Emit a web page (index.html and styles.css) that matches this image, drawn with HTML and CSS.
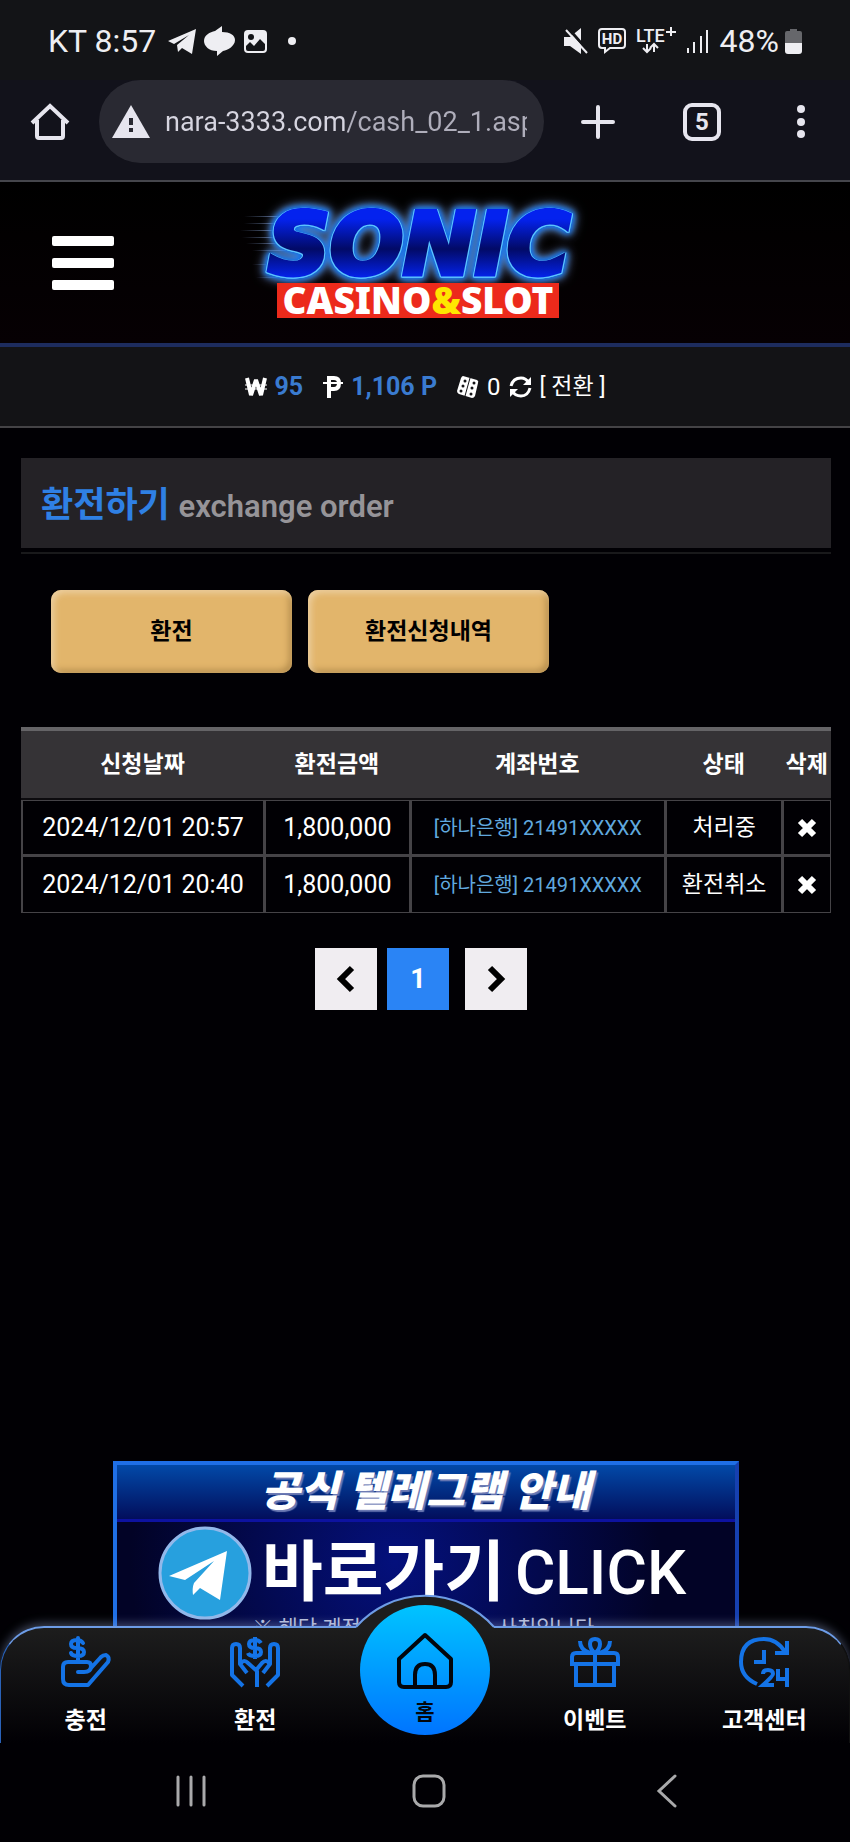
FILE: index.html
```html
<!DOCTYPE html>
<html lang="ko">
<head>
    <meta charset="UTF-8">
    <meta name="viewport" content="width=device-width, initial-scale=1.0">
    <title>환전하기</title>
    <link rel="stylesheet" href="styles.css">
</head>
<body>
    <!-- 상태 표시줄 -->
    <div class="status-bar">
        <div class="status-group">
            <span class="status-text">KT 8:57</span>
            <svg width="28" height="28" viewBox="0 0 28 28" fill="#eeeef2"><path d="M0 14 28 2 24 27 14 21 10 25 9 18 21 8 6 17Z"/></svg>
            <svg width="31" height="30" viewBox="0 0 31 30" fill="#eeeef2"><path d="M18 0V6C26 6 31 9 31 14C31 20 24 24 19 25L13 30V25C5 25 0 20 0 15C0 9 6 6 11 5Z"/></svg>
            <svg width="25" height="25" viewBox="0 0 25 25"><rect x="1" y="1" width="23" height="23" rx="4" fill="#eeeef2"/><circle cx="8" cy="8" r="3" fill="#131417"/><path d="M3 20V17L7 13 11 17 17 10 22 15V20Q22 22 20 22H5Q3 22 3 20Z" fill="#131417"/></svg>
            <span class="status-dot"></span>
        </div>
        <div class="status-group status-right">
            <svg width="24" height="26" viewBox="0 0 24 26"><path d="M0 9H6L17 0V26L6 18H0Z" fill="#eeeef2"/><path d="M3 -1 25 24" stroke="#131417" stroke-width="3"/><path d="M2 2 23 25" stroke="#eeeef2" stroke-width="2"/></svg>
            <svg class="hd" width="28" height="26" viewBox="0 0 28 26"><path d="M4 1H24Q27 1 27 4V17Q27 20 24 20H12L7 24V20H4Q1 20 1 17V4Q1 1 4 1Z" fill="none" stroke="#eeeef2" stroke-width="2"/><text x="14" y="16" text-anchor="middle" font-size="15">HD</text></svg>
            <svg class="lte" width="40" height="28" viewBox="0 0 40 28"><text x="0" y="15" font-size="18">LTE</text><path d="M35 0V9M30 5H40M11 17V24M7 21 11 25 15 21M18 25V18M14 21 18 17 22 21" fill="none" stroke="#eeeef2" stroke-width="2"/></svg>
            <svg width="24" height="26" viewBox="0 0 24 26" stroke="#eeeef2" stroke-width="2"><path d="M2 20V25M8 14V25M15 8V25M21 2V25"/></svg>
            <span class="status-text">48%</span>
            <svg class="battery" width="17" height="25" viewBox="0 0 17 25"><path d="M5 0H12V2H15Q17 2 17 4V15H0V4Q0 2 2 2H5Z" fill="#66676b"/><path d="M0 14H17V22Q17 25 14 25H3Q0 25 0 22Z" fill="#eeeef2"/></svg>
        </div>
    </div>

    <!-- 브라우저 주소창 -->
    <div class="browser-bar">
        <button class="browser-button" aria-label="홈페이지">
            <svg width="38" height="38" viewBox="0 0 38 38" fill="none" stroke="#e6e5ee" stroke-width="4"><path d="M1 20 19 3 37 20M6 17V33Q6 35 8 35H30Q32 35 32 33V17"/></svg>
        </button>
        <div class="address">
            <svg width="38" height="33" viewBox="0 0 38 33"><path d="M19 0 38 33H0Z" fill="#e6e5ee"/><path d="M17 13H21V20H17ZM17 23H21V27H17Z" fill="#292932"/></svg>
            <input class="address-input" type="text" aria-label="주소" value="nara-3333.com/cash_02_1.asp" readonly>
        </div>
        <div class="browser-actions">
            <button class="browser-button" aria-label="새 탭">
                <svg width="34" height="34" viewBox="0 0 34 34" stroke="#e6e5ee" stroke-width="4" stroke-linecap="round"><path d="M17 2V32M2 17H32"/></svg>
            </button>
            <button class="browser-button tab-count" aria-label="탭 5개">5</button>
            <button class="browser-button menu-dots" aria-label="더보기">
                <svg width="24" height="36" viewBox="0 0 24 36" fill="#e6e5ee"><circle cx="12" cy="5" r="4"/><circle cx="12" cy="18" r="4"/><circle cx="12" cy="30" r="4"/></svg>
            </button>
        </div>
    </div>

    <header class="site-header">
        <button class="hamburger" aria-label="메뉴"><span></span><span></span><span></span></button>
        <a class="logo" href="#" aria-label="SONIC CASINO&amp;SLOT">
            <svg width="370" height="130" viewBox="0 0 370 130">
                <defs>
                    <linearGradient id="sonic-fill" x1="0" y1="0.25" x2="0" y2="0.85">
                        <stop offset="0" stop-color="#0422ee"/>
                        <stop offset="0.5" stop-color="#020a66"/>
                        <stop offset="1" stop-color="#0424f2"/>
                    </linearGradient>
                    <linearGradient id="speed" x1="0" y1="0" x2="1" y2="0">
                        <stop offset="0" stop-color="#6f86b0" stop-opacity="0"/>
                        <stop offset="1" stop-color="#6f86b0"/>
                    </linearGradient>
                </defs>
                <g fill="url(#speed)">
                    <rect x="4" y="18" width="40" height="1"/><rect x="4" y="25" width="40" height="1"/>
                    <rect x="0" y="32" width="40" height="1"/><rect x="2" y="39" width="40" height="1"/>
                    <rect x="6" y="45" width="40" height="1"/><rect x="12" y="52" width="34" height="1"/>
                    <rect x="12" y="66" width="30" height="1"/><rect x="16" y="79" width="30" height="1"/>
                </g>
                <text class="logo-name" x="28" y="76">SONIC</text>
                <rect x="37" y="85" width="282" height="35" fill="#ec2a1b"/>
                <text class="logo-sub" x="178" y="116" text-anchor="middle">CASINO<tspan fill="#ffe600">&amp;</tspan>SLOT</text>
            </svg>
        </a>
    </header>

    <!-- 보유금액 -->
    <div class="wallet">
        <span class="wallet-item">
            <svg width="22" height="20" viewBox="0 0 22 20" fill="none" stroke="#fff" stroke-linejoin="bevel"><path d="M2 1 6 18 11 3 16 18 20 1" stroke-width="4"/><path d="M0 8H22M0 12H22" stroke-width="1"/></svg>
            <strong>95</strong>
        </span>
        <span class="wallet-item">
            <svg width="20" height="22" viewBox="0 0 20 22" fill="none" stroke="#fff"><path d="M6 22V2H11Q16 2 16 7Q16 13 11 13H6" stroke-width="4"/><path d="M0 7H20" stroke-width="2"/></svg>
            <strong>1,106 P</strong>
        </span>
        <span class="wallet-item casino">
            <svg width="22" height="22" viewBox="0 0 22 22"><path d="M6 0 20 4Q22 5 21 7L18 20Q17 22 15 22L2 18Q0 17 0 15L4 2Q5 0 6 0Z" fill="#fff"/><path d="M13 2 8 20" stroke="#131316" stroke-width="1"/><g fill="#131316"><circle cx="8" cy="5" r="1.5"/><circle cx="6" cy="10" r="1.5"/><circle cx="4" cy="15" r="1.5"/><circle cx="17" cy="7" r="1.5"/><circle cx="15" cy="12" r="1.5"/><circle cx="14" cy="18" r="1.5"/></g></svg>
            <span>0</span>
            <svg width="23" height="22" viewBox="0 0 23 22" fill="none" stroke="#fff" stroke-width="3"><path d="M2 10Q4 2 12 2Q17 2 20 7M21 12Q19 20 12 20Q6 20 3 15"/><path d="M22 1V9H14ZM1 21V13H9Z" fill="#fff" stroke="none"/></svg>
            <a href="#">[ 전환 ]</a>
        </span>
    </div>

    <main class="content">
        <div class="page-title">
            <h1>환전하기 <small>exchange order</small></h1>
        </div>

        <div class="tabs">
            <button class="tab-button">환전</button>
            <button class="tab-button">환전신청내역</button>
        </div>

        <table class="history">
            <thead>
                <tr>
                    <th class="col-date">신청날짜</th>
                    <th class="col-amount">환전금액</th>
                    <th class="col-account">계좌번호</th>
                    <th class="col-state">상태</th>
                    <th class="col-delete">삭제</th>
                </tr>
            </thead>
            <tbody>
                <tr>
                    <td>2024/12/01 20:57</td>
                    <td>1,800,000</td>
                    <td class="account">[하나은행] 21491XXXXX</td>
                    <td class="state">처리중</td>
                    <td><button class="delete-button" aria-label="삭제"><svg width="18" height="18" viewBox="0 0 18 18" stroke="#fff" stroke-width="6"><path d="M2 2 16 16M16 2 2 16"/></svg></button></td>
                </tr>
                <tr>
                    <td>2024/12/01 20:40</td>
                    <td>1,800,000</td>
                    <td class="account">[하나은행] 21491XXXXX</td>
                    <td class="state">환전취소</td>
                    <td><button class="delete-button" aria-label="삭제"><svg width="18" height="18" viewBox="0 0 18 18" stroke="#fff" stroke-width="6"><path d="M2 2 16 16M16 2 2 16"/></svg></button></td>
                </tr>
            </tbody>
        </table>

        <nav class="pagination" aria-label="페이지">
            <a href="#" aria-label="이전"><svg width="18" height="28" viewBox="0 0 18 28" fill="none" stroke="#000" stroke-width="6"><path d="M15 3 4 14 15 25"/></svg></a>
            <a href="#" class="current">1</a>
            <a href="#" class="next" aria-label="다음"><svg width="18" height="28" viewBox="0 0 18 28" fill="none" stroke="#000" stroke-width="6"><path d="M3 3 14 14 3 25"/></svg></a>
        </nav>

        <!-- 텔레그램 배너 -->
        <a class="banner" href="#">
            <span class="banner-title">공식 텔레그램 안내</span>
            <span class="banner-main">
                <svg width="94" height="94" viewBox="0 0 94 94"><circle cx="47" cy="47" r="45" fill="#27a0de" stroke="#92b8ea" stroke-width="3"/><path d="M11 50 69 25 62 74 42 62 35 69Q34 62 36 57L56 35 27 54Z" fill="#fff"/></svg>
                <span class="banner-go">바로가기</span>
                <span class="banner-click">CLICK</span>
            </span>
            <span class="banner-note">※ 해당 계정 외 다른 계정은 사칭입니다.</span>
        </a>
    </main>

    <!-- 하단 메뉴 -->
    <nav class="bottom-nav">
        <svg class="nav-bump" width="150" height="38" viewBox="0 0 150 38"><path d="M6 35A92 92 0 0 1 144 35V38H6Z" fill="#1d1d1d"/><path d="M6 35A92 92 0 0 1 144 35" fill="none" stroke="#6d9ce6" stroke-width="2"/></svg>
        <a href="#">
            <svg width="50" height="50" viewBox="0 0 50 50" fill="none" stroke="#1473e6" stroke-width="4" stroke-linejoin="round" stroke-linecap="round"><path d="M22 6Q20 3 16 3Q10 3 10 7Q10 11 16 11Q23 11 23 15Q23 19 17 19Q11 19 10 16M17 1V23"/><path d="M17 35H23Q30 35 30 29Q30 25 26 25H7Q2 25 2 30V42Q2 48 8 48H27L47 25Q49 20 45 18Q42 18 40 20L30 31"/></svg>
            <span>충전</span>
        </a>
        <a href="#">
            <svg width="50" height="50" viewBox="0 0 50 50" fill="none" stroke="#1473e6" stroke-width="4" stroke-linejoin="round"><path d="M31 6Q29 3 25 3Q19 3 19 7Q19 11 25 11Q31 11 31 15Q31 19 25 19Q19 19 18 16M25 0V22"/><path d="M13 49 2 38V11Q2 7 6 7Q10 7 10 11V27L17 36M11 26Q14 22 18 26L27 34V50M37 49 48 38V11Q48 7 44 7Q40 7 40 11V27L33 36M39 26Q36 22 32 26L27 32"/></svg>
            <span>환전</span>
        </a>
        <a href="#" class="nav-home">
            <svg width="58" height="58" viewBox="0 0 58 58" fill="none" stroke="#03060c" stroke-width="4" stroke-linejoin="round"><path d="M29 3 55 27V50Q55 55 50 55H8Q3 55 3 50V27ZM19 55V43Q19 32 29 32Q39 32 39 43V55"/></svg>
            <span>홈</span>
        </a>
        <a href="#">
            <svg width="50" height="50" viewBox="0 0 50 50" fill="none" stroke="#1473e6" stroke-width="4"><path d="M2 27V20Q2 16 6 16H44Q48 16 48 20V27ZM6 27V48H44V27M25 16V48M10 4Q10 13 20 16M40 4Q40 13 30 16M25 16Q20 12 20 7Q20 2 25 2Q30 2 30 7Q30 12 25 16"/></svg>
            <span>이벤트</span>
        </a>
        <a href="#">
            <svg class="icon-24" width="50" height="50" viewBox="0 0 50 50" fill="none" stroke="#1473e6" stroke-width="4"><path d="M18 47Q2 40 2 25Q2 2 25 2Q38 2 46 15M48 4V16H36M25 13V25H15"/><path d="M24 37Q24 33 29 33Q34 33 34 37Q34 39 24 48H35M39 32V42H48M48 31V50"/></svg>
            <span>고객센터</span>
        </a>
    </nav>

    <!-- 시스템 내비게이션 -->
    <div class="system-nav">
        <button aria-label="최근 앱"><svg width="32" height="32" viewBox="0 0 32 32" stroke="#a9a9ab" stroke-width="3" stroke-linecap="round"><path d="M3 2V30M16 2V30M29 2V30"/></svg></button>
        <button aria-label="홈"><svg width="34" height="34" viewBox="0 0 34 34"><rect x="2" y="2" width="30" height="30" rx="9" fill="none" stroke="#a9a9ab" stroke-width="3"/></svg></button>
        <button aria-label="뒤로"><svg width="20" height="34" viewBox="0 0 20 34" fill="none" stroke="#a9a9ab" stroke-width="3" stroke-linecap="round"><path d="M18 2 2 17 18 32"/></svg></button>
    </div>
</body>
</html>
```
FILE: styles.css
```css
* {
    margin: 0;
    padding: 0;
    box-sizing: border-box;
}

body {
    display: flex;
    flex-direction: column;
    min-height: 100vh;
    background: #010004;
    color: #fff;
    font-family: Roboto, "Noto Sans CJK KR", sans-serif;
    font-size: 24px;
    line-height: 32px;
}

a {
    color: inherit;
    text-decoration: none;
}

button {
    border: none;
    background: none;
    color: inherit;
    font-family: inherit;
    cursor: pointer;
}

svg {
    display: block;
    flex-shrink: 0;
    overflow: visible;
}

/* 상태 표시줄 */
.status-bar {
    display: flex;
    justify-content: space-between;
    height: 80px;
    padding: 2px 48px 0;
    background: #131417;
}

.status-group {
    display: flex;
    align-items: center;
    gap: 8px;
}

.status-right {
    gap: 10px;
}

.status-text {
    margin: 0 4px 0 0;
    color: #eeeef2;
    font-size: 32px;
}

.status-dot {
    width: 8px;
    height: 8px;
    margin-left: 12px;
    border-radius: 50%;
    background: #eeeef2;
}

.hd,
.lte {
    fill: #eeeef2;
    font-weight: 700;
}

.lte {
    font-weight: 500;
}

.battery {
    margin-left: -8px;
}

/* 브라우저 주소창 */
.browser-bar {
    display: flex;
    align-items: center;
    padding: 0 37px 17px 31px;
    background: #12121b;
    border-bottom: 2px solid #45464c;
}

.browser-button {
    display: flex;
    align-items: center;
    justify-content: center;
}

.address {
    display: flex;
    flex: 1;
    align-items: center;
    gap: 15px;
    height: 83px;
    margin: 0 37px 0 30px;
    padding: 0 17px 0 13px;
    border-radius: 42px;
    background: #292932;
}

.address-input {
    flex: 1;
    min-width: 0;
    border: none;
    outline: none;
    background: linear-gradient(90deg, #d6d5e0 50%, #afaebb 51%);
    -webkit-background-clip: text;
    background-clip: text;
    color: transparent;
    font-family: inherit;
    font-size: 27px;
}

.browser-actions {
    display: flex;
    align-items: center;
    gap: 68px;
}

.tab-count {
    width: 38px;
    height: 38px;
    border: 4px solid #e6e5ee;
    border-radius: 9px;
    color: #e6e5ee;
    font-size: 24px;
    font-weight: 700;
}

/* 헤더 */
.site-header {
    display: grid;
    grid-template-columns: 1fr auto 1fr;
    align-items: center;
    padding: 16px 52px 15px;
    border-bottom: 4px solid #1d2c5e;
    background: linear-gradient(#000, #060003);
}

.hamburger {
    display: flex;
    flex-direction: column;
    gap: 12px;
    width: 62px;
}

.hamburger span {
    height: 10px;
    border-radius: 2px;
    background: #fff;
}

.logo-name {
    fill: url(#sonic-fill);
    stroke: url(#sonic-fill);
    stroke-width: 5px;
    font-family: "DejaVu Sans", sans-serif;
    font-size: 86px;
    font-style: italic;
    font-weight: 700;
    filter: drop-shadow(1px 0 0 #5cc4ff) drop-shadow(-1px 0 0 #5cc4ff) drop-shadow(0 1px 0 #5cc4ff) drop-shadow(0 0 3px #1070e8) drop-shadow(0 0 2px #1070e8) drop-shadow(0 0 5px #7b9ad0);
}

.logo-sub {
    fill: #fff;
    font-family: "Noto Sans", sans-serif;
    font-size: 37px;
    font-weight: 900;
}

/* 보유금액 */
.wallet {
    display: flex;
    align-items: center;
    justify-content: center;
    gap: 20px;
    height: 81px;
    border-bottom: 2px solid #444346;
    background: #131316;
}

.wallet-item {
    display: flex;
    align-items: center;
    gap: 8px;
}

.wallet-item strong {
    color: #3a7bd0;
    font-size: 25px;
    font-weight: 700;
}

.casino a {
    font-size: 23px;
}

/* 본문 */
.content {
    display: flex;
    flex: 1;
    flex-direction: column;
    padding: 30px 19px 0 21px;
}

.page-title {
    padding-bottom: 4px;
    border-bottom: 2px solid #19191b;
}

.page-title h1 {
    padding: 23px 20px 16px;
    background: #242226;
    color: #2f80e4;
    font-size: 35px;
    line-height: 50px;
}

.page-title small {
    color: #969498;
    font-size: 31px;
    font-weight: 600;
}

.tabs {
    display: flex;
    gap: 16px;
    padding: 36px 30px 54px;
}

.tab-button {
    width: 241px;
    height: 83px;
    padding-bottom: 6px;
    border-radius: 10px;
    background: #e2b56b;
    box-shadow: inset 3px 3px 6px #edcfa0, inset -3px -3px 6px #b58d4c;
    color: #000;
    font-size: 23px;
    font-weight: 700;
}

.history {
    width: 100%;
    border-spacing: 0;
    border-top: 4px solid #656467;
    table-layout: fixed;
    text-align: center;
}

.history th {
    height: 69px;
    border-bottom: 2px solid #0c0b0e;
    background: #353336;
    font-size: 23px;
    font-weight: 700;
    white-space: nowrap;
}

.history td {
    height: 57px;
    border: 1px solid #454347;
    border-width: 0 1px 3px 2px;
    font-size: 25px;
    white-space: nowrap;
}

.history tbody tr:first-child td {
    border-top-width: 1px;
}

.history tbody tr:last-child td {
    height: 56px;
    border-bottom-width: 1px;
}

.history .account {
    color: #60a8de;
    font-size: 20px;
}

.history .state {
    font-size: 23px;
}

.col-date {
    width: 30%;
}

.col-amount {
    width: 18%;
}

.col-account {
    width: 31.5%;
}

.col-state {
    width: 14.5%;
}

.col-delete {
    width: 6%;
}

.delete-button {
    display: block;
    margin: 0 auto;
}

/* 페이지 번호 */
.pagination {
    display: flex;
    justify-content: center;
    gap: 10px;
    margin: 35px 0;
    padding-right: 10px;
}

.pagination a {
    display: flex;
    align-items: center;
    justify-content: center;
    width: 62px;
    height: 62px;
    background: #f0edf1;
    color: #000;
    font-size: 27px;
    font-weight: 700;
}

.pagination .current {
    background: #2a84f5;
    color: #fff;
}

.pagination .next {
    margin-left: 6px;
}

/* 텔레그램 배너 */
.banner {
    height: 165px;
    margin: auto 92px 0;
    overflow: hidden;
    border: 4px solid #1f6fe6;
    border-bottom: none;
    border-right-color: #1640b0;
    background: radial-gradient(circle at 45% 60%, #04107c, #020326 75%);
    white-space: nowrap;
}

.banner-title {
    display: block;
    border-bottom: 3px solid #0d12a0;
    background: linear-gradient(#0249a8, #020e5c);
    font-size: 42px;
    font-style: italic;
    font-weight: 900;
    line-height: 54px;
    text-align: center;
    text-shadow: 2px 2px 1px #6d7bb4;
}

.banner-main {
    display: flex;
    align-items: center;
    gap: 10px;
    height: 94px;
    margin: 4px 0 0 41px;
}

.banner-go {
    font-size: 66px;
    font-weight: 700;
}

.banner-click {
    font-size: 62px;
    font-weight: 500;
}

.banner-note {
    display: block;
    margin-top: -8px;
    color: #b9c0dc;
    font-size: 21px;
    text-align: center;
}

/* 하단 메뉴 */
.bottom-nav {
    position: relative;
    display: flex;
    height: 117px;
    border-top: 2px solid #6d9ce6;
    border-left: 1px solid #2a62b8;
    border-right: 1px solid #111;
    border-radius: 44px 44px 0 0;
    background: linear-gradient(#1d1d1d, #010004);
    box-shadow: 0 -3px 10px rgba(150, 165, 205, 0.4);
}

.bottom-nav a {
    position: relative;
    display: flex;
    flex: 1;
    flex-direction: column;
    align-items: center;
    gap: 18px;
    padding-top: 9px;
    font-size: 23px;
    font-weight: 700;
}

.nav-bump {
    position: absolute;
    top: -36px;
    left: calc(50% - 75px);
}

.bottom-nav .nav-home {
    flex: none;
    gap: 6px;
    width: 130px;
    height: 130px;
    margin: -23px 20px 0;
    padding-top: 27px;
    border-radius: 50%;
    background: linear-gradient(#00c4ff, #0074ff);
    color: #03060c;
    font-size: 21px;
}

/* 시스템 내비게이션 */
.system-nav {
    position: relative;
    display: flex;
    height: 99px;
    padding: 0 64px 4px 72px;
    background: #010004;
}

.system-nav button {
    display: flex;
    flex: 1;
    align-items: center;
    justify-content: center;
}
```
